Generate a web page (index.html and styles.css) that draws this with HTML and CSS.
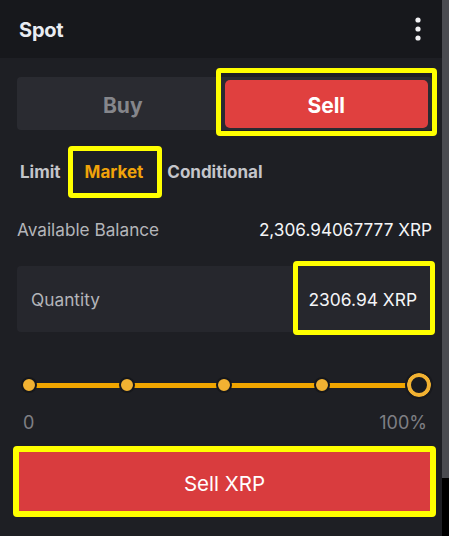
FILE: index.html
```html
<!DOCTYPE html>
<html>
<head>
<meta charset="utf-8">
<link rel="stylesheet" href="styles.css">
</head>
<body>
<div class="page">
  <div class="panel">
    <header class="header">
      <div class="title">Spot</div>
      <svg class="kebab" width="8" height="26" viewBox="0 0 8 26">
        <circle cx="4" cy="4" r="2.6" fill="#f2f2f4"/>
        <circle cx="4" cy="13" r="2.6" fill="#f2f2f4"/>
        <circle cx="4" cy="22" r="2.6" fill="#f2f2f4"/>
      </svg>
    </header>
    <div class="content">
      <div class="segment">
        <div class="seg-buy">Buy</div>
        <div class="seg-sell">Sell<span class="mark mark-sell"></span></div>
      </div>
      <div class="tabs">
        <span class="tab">Limit</span>
        <span class="tab tab-active">Market<span class="mark mark-market"></span></span>
        <span class="tab">Conditional</span>
      </div>
      <div class="balance">
        <span class="bal-label">Available Balance</span>
        <span class="bal-value">2,306.94067777 XRP</span>
      </div>
      <div class="qty">
        <span class="qty-label">Quantity</span>
        <span class="qty-value">2306.94 XRP<span class="mark mark-qty"></span></span>
      </div>
      <div class="slider">
        <div class="track"></div>
        <div class="dots">
          <span class="slot"><span class="dot"></span></span>
          <span class="slot"><span class="dot"></span></span>
          <span class="slot"><span class="dot"></span></span>
          <span class="slot"><span class="dot"></span></span>
          <span class="slot"><span class="knob"></span></span>
        </div>
      </div>
      <div class="scale">
        <span>0</span>
        <span>100%</span>
      </div>
      <div class="sell-btn">Sell XRP<span class="mark mark-btn"></span></div>
    </div>
  </div>
  <div class="scrollbar"><div class="thumb"></div></div>
</div>
</body>
</html>
```

FILE: styles.css
```css
* { box-sizing: border-box; }
html, body { margin: 0; padding: 0; }
body {
  width: 449px;
  height: 536px;
  overflow: hidden;
  background: #1e1f24;
  font-family: Inter, "Noto Sans", sans-serif;
}
.page {
  display: flex;
  width: 449px;
  height: 536px;
}
.panel {
  width: 442px;
  height: 536px;
  background: #1e1f24;
  display: flex;
  flex-direction: column;
}
.scrollbar {
  width: 7px;
  height: 536px;
  background: #000;
}
.thumb {
  width: 7px;
  height: 478px;
  background: #4a4b50;
}
.header {
  height: 58px;
  background: #17181c;
  display: flex;
  align-items: center;
  justify-content: space-between;
  padding: 0 20px 0 19px;
}
.title {
  color: #e9ecf2;
  font-weight: 700;
  font-size: 20px;
  letter-spacing: -0.2px;
  margin-top: 2px;
}
.kebab { display: block; }
.content {
  display: flex;
  flex-direction: column;
  padding: 0 10px 0 17px;
}
.mark {
  position: absolute;
  border: 5px solid #ffff00;
  border-radius: 4px;
  pointer-events: none;
}
.segment {
  margin-top: 19px;
  height: 53px;
  background: #2a2b31;
  border-radius: 4px;
  display: grid;
  grid-template-columns: 1fr 1fr;
  padding: 3px 4px 2px 4px;
}
.seg-buy, .seg-sell {
  display: flex;
  align-items: center;
  justify-content: center;
  font-weight: 700;
  font-size: 21px;
  padding-top: 3px;
}
.seg-buy { color: #85868b; }
.seg-sell {
  position: relative;
  background: #e0403f;
  color: #fff;
  border-radius: 5px;
}
.mark-sell { left: -9px; right: -9px; top: -12px; bottom: -8px; }
.tabs {
  margin-top: 30px;
  height: 24px;
  display: flex;
  align-items: center;
  gap: 24px;
  padding-left: 3px;
  font-weight: 700;
  font-size: 17px;
}
.tab { color: #c4c5ca; position: relative; }
.tab-active { color: #f0a30a; }
.mark-market { left: -17px; right: -19px; top: -16px; bottom: -16px; }
.balance {
  margin-top: 33px;
  height: 24px;
  display: flex;
  align-items: center;
  justify-content: space-between;
  font-size: 17.2px;
}
.bal-label { color: #b4b5ba; }
.bal-value { color: #f4f5f7; }
.qty {
  margin-top: 25px;
  height: 66px;
  background: #26272d;
  border-radius: 4px;
  display: flex;
  align-items: center;
  justify-content: space-between;
  padding: 1px 15px 0 14px;
  font-size: 17.3px;
}
.qty-label { color: #b4b5ba; }
.qty-value { color: #f4f5f7; font-size: 17.4px; position: relative; }
.mark-qty { left: -16px; right: -18px; top: -28px; bottom: -25px; }
.slider {
  margin-top: 40px;
  height: 26px;
  position: relative;
}
.track {
  position: absolute;
  left: 12px;
  right: 13px;
  top: 11px;
  height: 5px;
  background: #f0a500;
}
.dots {
  position: relative;
  height: 26px;
  display: flex;
  align-items: center;
  justify-content: space-between;
  margin: 0 -1px 0 -2px;
}
.slot {
  width: 28px;
  height: 28px;
  display: flex;
  align-items: center;
  justify-content: center;
}
.dot {
  width: 16px;
  height: 16px;
  border-radius: 50%;
  background: #f2b232;
  border: 2px solid #16171b;
}
.knob {
  width: 28px;
  height: 28px;
  border-radius: 50%;
  background: #1a1b1f;
  border: 2px solid #18191d;
  box-shadow: inset 0 0 0 4px #f2b232;
  display: block;
}
.scale {
  margin-top: 13px;
  height: 22px;
  display: flex;
  justify-content: space-between;
  align-items: center;
  padding: 0 5px 0 6px;
  color: #7e7f84;
  font-size: 18px;
}
.sell-btn {
  position: relative;
  margin: 19px 2px 0 2px;
  height: 59px;
  background: #d93c3e;
  color: #fff;
  display: flex;
  align-items: center;
  justify-content: center;
  font-size: 20.5px;
  padding-top: 4px;
}
.mark-btn { left: -6px; right: -6px; top: -6px; bottom: -6px; border-width: 6px; border-radius: 4px; }
```
